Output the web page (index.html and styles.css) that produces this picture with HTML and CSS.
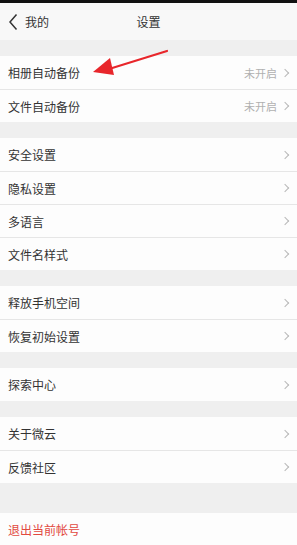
FILE: index.html
```html
<!DOCTYPE html>
<html lang="zh-CN">
<head>
  <meta charset="UTF-8">
  <meta name="viewport" content="width=device-width, initial-scale=1">
  <title>设置</title>
  <link rel="stylesheet" href="styles.css">
</head>
<body>
  <div class="page">
    <div class="status"></div>
    <div class="header">
      <div class="back">
        <svg width="10" height="18" viewBox="0 0 10 18"><path d="M8.5 1.5 L2 9 L8.5 16.5" fill="none" stroke="#333" stroke-width="1.5"/></svg>
        <span>我的</span>
      </div>
      <div class="title">设置</div>
    </div>

    <div class="group">
      <div class="row"><span class="label">相册自动备份</span><span class="value">未开启</span><i class="chev"></i></div>
      <div class="row"><span class="label">文件自动备份</span><span class="value">未开启</span><i class="chev"></i></div>
    </div>

    <div class="group">
      <div class="row"><span class="label">安全设置</span><i class="chev"></i></div>
      <div class="row"><span class="label">隐私设置</span><i class="chev"></i></div>
      <div class="row"><span class="label">多语言</span><i class="chev"></i></div>
      <div class="row"><span class="label">文件名样式</span><i class="chev"></i></div>
    </div>

    <div class="group">
      <div class="row"><span class="label">释放手机空间</span><i class="chev"></i></div>
      <div class="row"><span class="label">恢复初始设置</span><i class="chev"></i></div>
    </div>

    <div class="group">
      <div class="row"><span class="label">探索中心</span><i class="chev"></i></div>
    </div>

    <div class="group">
      <div class="row"><span class="label">关于微云</span><i class="chev"></i></div>
      <div class="row"><span class="label">反馈社区</span><i class="chev"></i></div>
    </div>

    <div class="group logout">
      <div class="row"><span class="label red">退出当前帐号</span></div>
    </div>

    <svg class="arrow" width="80" height="32" viewBox="0 0 80 32">
      <line x1="74" y1="2" x2="16" y2="20" stroke="#e8262b" stroke-width="2.2" stroke-linecap="round"/>
      <polygon points="0,23 17,9 21,26" fill="#e8262b"/>
    </svg>
  </div>
</body>
</html>
```

FILE: styles.css
```css
body {
  margin: 0;
  background: #efefef;
  font-family: "Noto Sans CJK SC", "Noto Sans", sans-serif;
  color: #333;
}
.page {
  position: relative;
  width: 297px;
  height: 545px;
  overflow: hidden;
  background: #efefef;
}
.status {
  height: 3px;
  background: #111;
}
.header {
  position: relative;
  height: 37px;
  background: #f8f8f8;
  display: flex;
  align-items: center;
  justify-content: center;
}
.back {
  position: absolute;
  left: 8px;
  top: 0;
  height: 37px;
  display: flex;
  align-items: center;
  gap: 7px;
  font-size: 12px;
}
.title {
  font-size: 12px;
}
.group {
  background: #fdfdfd;
  margin-top: 16px;
}
.group.logout {
  margin-top: 30px;
}
.row {
  box-sizing: border-box;
  height: 33px;
  display: flex;
  align-items: center;
  padding: 0 9px 0 8px;
  border-top: 1px solid #e6e6e6;
  font-size: 12px;
}
.row:first-child {
  border-top: none;
}
.label {
  flex: 1;
  color: #333;
}
.label.red {
  color: #e2493f;
}
.value {
  color: #b0b0b0;
  font-size: 11px;
  margin-right: 5px;
}
.chev {
  width: 5px;
  height: 5px;
  border-top: 1px solid #b8b8b8;
  border-right: 1px solid #b8b8b8;
  transform: rotate(45deg);
}
.arrow {
  position: absolute;
  left: 93px;
  top: 49px;
}
```
